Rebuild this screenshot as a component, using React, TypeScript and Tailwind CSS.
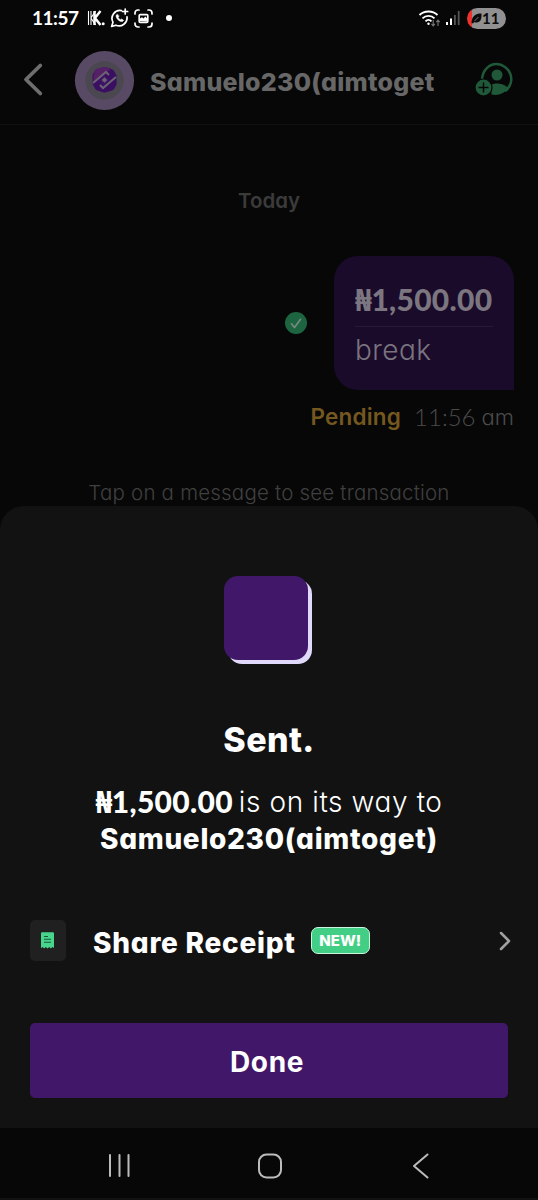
import React from "react";

function Money({ className }: { className: string }) {
  return (
    <span className={`whitespace-nowrap font-['Lato',sans-serif] text-[30px] font-black tracking-[0.3px] ${className}`}>
      <span className="mr-[1px] font-['Noto_Sans',sans-serif] text-[29.5px] font-black leading-none tracking-[-1.500px]">₦</span>1,500.00
    </span>
  );
}

function StatusBar() {
  return (
    <div className="flex h-9 items-center text-white">
      <span className="ml-8 w-[47px] whitespace-nowrap font-['Lato',sans-serif] text-[19px] font-bold leading-9 tracking-[-0.5px]">11:57</span>
      <svg className="ml-[8px]" width="18" height="16" viewBox="0 0 18 16" fill="none" stroke="currentColor">
        <path d="M1.500 1v14M4 1v14M8.500 1 4 8l4.500 7" strokeWidth="1.100" />
        <path d="M7.500 1v14M13.500 1 8 8l5.500 7" strokeWidth="2.500" />
        <circle cx="16.200" cy="13.800" r="1.500" fill="currentColor" stroke="none" />
      </svg>
      <svg className="ml-[5px]" width="20" height="20" viewBox="0 0 20 20" fill="none" stroke="currentColor" strokeWidth="1.700" strokeLinecap="round" strokeLinejoin="round">
        <path d="M11.5 2.6A8 8 0 0 0 3 14.3L1.6 18.4l4.3-1.2A8 8 0 0 0 17 8.8" />
        <path d="M15.200 1v5M12.700 3.500h5" />
        <path d="M7.200 6.300 6 7.400c0 3.200 3.300 6.400 6.500 6.200l1.200-1.200-2.100-1.500-1.200.8c-1-.5-1.800-1.300-2.200-2.300l.8-1.100z" fill="currentColor" strokeWidth="0.500" />
      </svg>
      <svg className="ml-[4px]" width="19" height="19" viewBox="0 0 19 19" fill="none" stroke="currentColor" strokeWidth="1.700" strokeLinecap="round">
        <path d="M1 5V4a3 3 0 0 1 3-3h1M14 1h1a3 3 0 0 1 3 3v1M18 14v1a3 3 0 0 1-3 3h-1M5 18H4a3 3 0 0 1-3-3v-1" />
        <rect x="5.200" y="5.700" width="8.600" height="7.600" rx="1" strokeWidth="1.700" />
        <path d="m6 12 0-2.500 2-1.300 1.500 1.300 1.800-2 2 2v3z" fill="currentColor" stroke="none" />
      </svg>
      <span className="ml-[13px] size-[6px] rounded-full bg-white" />
      <svg className="ml-auto" width="24" height="19" viewBox="0 0 24 19" fill="none" stroke="currentColor" strokeWidth="1.900">
        <path d="M1.500 6c4.800-4.700 13.200-4.700 18 0M4.500 9.300c3.300-3.300 8.700-3.300 12 0M7.500 12.300c1.700-1.700 4.300-1.700 6 0" />
        <circle cx="10.500" cy="14.800" r="1.200" fill="currentColor" stroke="none" />
        <path d="M15.200 11v5.500M13.500 14.800l1.700 2 1.700-2M20 17v-5.500M18.300 13.200l1.700-2 1.700 2" stroke="#777" strokeWidth="1.100" />
      </svg>
      <svg className="ml-[3px]" width="15" height="16" viewBox="0 0 15 16">
        <path d="M1 12h2v3H1zM5 8.500h2V15H5z" fill="#fff" />
        <path d="M9 5h1.800v10H9zM12.800 1h1.800v14h-1.800z" fill="#555" />
      </svg>
      <div className="mr-8 ml-[7px] flex h-[21px] w-[39px] items-center overflow-hidden rounded-full bg-[linear-gradient(90deg,#ec332c_0_5px,#919191_5px)] text-[#0b0b0b]">
        <svg className="ml-[4px]" width="11" height="11" viewBox="0 0 11 11">
          <path d="M.5 10C1 3 4 .5 10.500.5c.3 5-.8 9-5 9-1 0-1.800-.2-2.300-.6L2 10.500z" fill="currentColor" />
          <path d="M3.500 8 7.500 4" stroke="#919191" strokeWidth=".8" />
        </svg>
        <span className="font-['Lato',sans-serif] text-[15px] font-bold leading-5">11</span>
      </div>
    </div>
  );
}

function Header() {
  return (
    <header className="flex h-[89px] items-center border-b border-[#111] pl-[22px] pr-6">
      <svg width="22" height="36" viewBox="0 0 22 36" fill="none" stroke="#6e6e6e" strokeWidth="3.800" strokeLinecap="round" strokeLinejoin="round" className="mb-[2px]">
        <path d="M18.300 4.500 4 18.500l14.300 14" />
      </svg>
      <svg className="ml-[30px]" width="61" height="61" viewBox="0 0 61 61">
        <circle cx="30.500" cy="30.500" r="29.600" fill="#584a64" />
        <circle cx="30.500" cy="30.500" r="19.200" fill="#4b4750" />
        <path d="M21 20.500Q22 19 24 18.700l5-1.500q1.500-.4 3 0l5.500 1.800q2 .6 3 2.500l1.500 3q.6 1 .6 2v7q0 1-.6 2l-1.800 3.200q-1 1.500-3 2L32 42.200q-1.500.4-3 0L23.500 40.500q-1.700-.5-2.500-2l-2-3.500q-.5-1-.5-2v-7q0-1 .5-2z" fill="#3a0f62" />
        <path d="M21 20.500Q22 19 24 18.700l5-1.500q1.500-.4 3 0l5 1.600-17.500 13V26z" fill="#562066" />
        <path d="m19 33 13-11 3 3M42 27 29 38l-3-3" fill="none" stroke="#6a6371" strokeWidth="2.100" />
        <path d="m25 31 5.500-5.500 5 4.500-5.500 5.500z" fill="#3f1467" />
        <path d="m30.500 27.300 2.800 2.700-2.800 2.700-2.800-2.700z" fill="#6a6371" />
      </svg>
      <h1 className="ml-[15px] mt-[3px] whitespace-nowrap text-[25px] font-extrabold leading-8 tracking-[0.25px] text-[#676767]">Samuelo230(aimtoget</h1>
      <svg className="ml-auto" width="39" height="36" viewBox="0 0 39 36">
        <path d="M7.200 16C8 8 14 2.100 21.500 2.100A15 15 0 0 1 31 28.500" fill="none" stroke="#1f593a" strokeWidth="2.500" strokeLinecap="round" />
        <circle cx="22" cy="13" r="5.500" fill="#1f593a" />
        <path d="M16.500 32.500c0-6-.5-8.500.5-10 3.500-1.600 10.500-1.500 14.500 2l1.500 2c-4 5.500-10 7.500-16.500 6z" fill="#1f593a" />
        <circle cx="8.500" cy="25.500" r="8.500" fill="#1f593a" stroke="#070707" strokeWidth="1.200" />
        <path d="M8.500 20.500v10M3.500 25.500h10" stroke="#070707" strokeWidth="1.500" />
      </svg>
    </header>
  );
}

function Conversation() {
  return (
    <main className="flex h-[381px] flex-col overflow-hidden">
      <div className="mt-[61px] text-center text-[20.500px] font-semibold leading-[30px] text-[#3b3b3b]">Today</div>
      <div className="mt-[40px] mr-6 flex h-[134px] items-center justify-end gap-[27px]">
        <svg width="22" height="22" viewBox="0 0 22 22" fill="none">
          <circle cx="11" cy="11" r="11" fill="#1d6541" />
          <path d="m6.500 11.800 3 3.700 6-8.200" stroke="#778a80" strokeWidth="1.700" strokeLinecap="round" strokeLinejoin="round" />
        </svg>
        <div className="flex h-[134px] w-[180px] flex-col rounded-[24px] rounded-br-none bg-[#1a0b2a] px-[21px]">
          <Money className="mt-[23px] leading-10 text-[#7b7680]" />
          <div className="mt-[7px] h-px w-full bg-[#281a36]" />
          <span className="mt-[3px] text-[28px] font-light leading-[40px] tracking-[0.4px] text-[#797480]">break</span>
        </div>
      </div>
      <div className="mt-[13px] mr-6 flex justify-end whitespace-nowrap leading-[28px]">
        <span className="text-[22.500px] font-semibold tracking-[0.2px] text-[#75581f]">Pending</span>
        <span className="ml-[13px] font-['Lato',sans-serif] text-[24px] font-light text-[#4b4b4b]">11:56</span>
        <span className="ml-[6px] text-[22px] font-light text-[#4b4b4b]">am</span>
      </div>
      <p className="mt-[47px] whitespace-nowrap text-center text-[20.500px] font-light leading-[30px] tracking-[0.200px] text-[#404040]">Tap on a message to see transaction</p>
    </main>
  );
}

function Sheet() {
  return (
    <section className="flex h-[622px] flex-col items-center rounded-t-[24px] bg-[#121212] text-white">
      <div className="mr-[6px] mt-[70px] size-[84px] rounded-[14px] bg-[#411869] shadow-[4px_4px_0_#e0d9fb]" />
      <h2 className="mt-[59px] text-[34px] font-extrabold leading-[42px] tracking-[0.400px]">Sent.</h2>
      <div className="mt-[22px] flex h-[37px] items-center whitespace-nowrap">
        <Money className="leading-[37px]" />
        <span className="ml-[6px] mt-[2px] text-[28px] font-light leading-[37px] tracking-[0.6px]">is on its way to</span>
      </div>
      <strong className="mt-px whitespace-nowrap text-[28px] font-extrabold leading-[37px] tracking-[0.7px]">Samuelo230(aimtoget)</strong>
      <div className="mt-[62px] flex h-[41px] w-full items-center pl-[30px] pr-[26px]">
        <div className="flex h-[41px] w-9 items-center justify-center rounded-[5px] bg-[#202020]">
          <svg width="13" height="17" viewBox="0 0 13 17" className="mr-[1px]">
            <path d="M0 1.200Q0 .3 1 .3h11q1 0 1 .9V16l-1.600-1-1.600 1.500L8.200 15 6.500 16.500 4.800 15l-1.600 1.500L1.600 15 0 16.300z" fill="#49d48c" />
            <path d="M3 4.500h4M3 7.300h7M3 10.200h7" stroke="#165838" strokeWidth="1.100" />
          </svg>
        </div>
        <span className="ml-[27px] mt-[4px] whitespace-nowrap text-[28px] font-extrabold leading-10 tracking-[0.75px]">Share Receipt</span>
        <span className="ml-[15px] flex h-[27px] w-[59px] items-center justify-center rounded-[7px] border-[1.500px] border-[#c9f5df] bg-[#43ce86] text-[15px] font-extrabold leading-none">NEW!</span>
        <svg className="ml-auto" width="14" height="20" viewBox="0 0 14 20" fill="none" stroke="#a0a0a0" strokeWidth="2.500" strokeLinecap="round" strokeLinejoin="round">
          <path d="m3 2 8 8-8 8" />
        </svg>
      </div>
      <button className="mr-px mt-[62px] h-[75px] w-[478px] rounded-[5px] bg-[#411869] pr-[3px] pt-[3px] text-[28px] font-bold leading-[72px] tracking-[0.600px]">Done</button>
    </section>
  );
}

function NavigationBar() {
  return (
    <nav className="flex h-[72px] items-center border-b-2 border-[#121212] pl-[108px] pt-[4px] text-[#bcbcbc]">
      <svg width="23" height="26" viewBox="0 0 23 26" stroke="currentColor" strokeWidth="2" strokeLinecap="round">
        <path d="M2 3v21M11.500 3v21M20.500 3v21" />
      </svg>
      <svg className="ml-[126px]" width="26" height="27" viewBox="0 0 26 27" fill="none" stroke="currentColor" strokeWidth="2">
        <rect x="2" y="2.500" width="22" height="23" rx="7.500" />
      </svg>
      <svg className="ml-[129px]" width="18" height="27" viewBox="0 0 18 27" fill="none" stroke="currentColor" strokeWidth="2" strokeLinecap="round" strokeLinejoin="round">
        <path d="M15.500 2.500 2 14l13.500 11.500" />
      </svg>
    </nav>
  );
}

export default function App() {
  return (
    <div className="flex h-[1200px] w-[538px] flex-col overflow-hidden bg-[#070707] font-['Inter',sans-serif] [font-feature-settings:'cv11']">
      <StatusBar />
      <Header />
      <Conversation />
      <Sheet />
      <NavigationBar />
    </div>
  );
}
